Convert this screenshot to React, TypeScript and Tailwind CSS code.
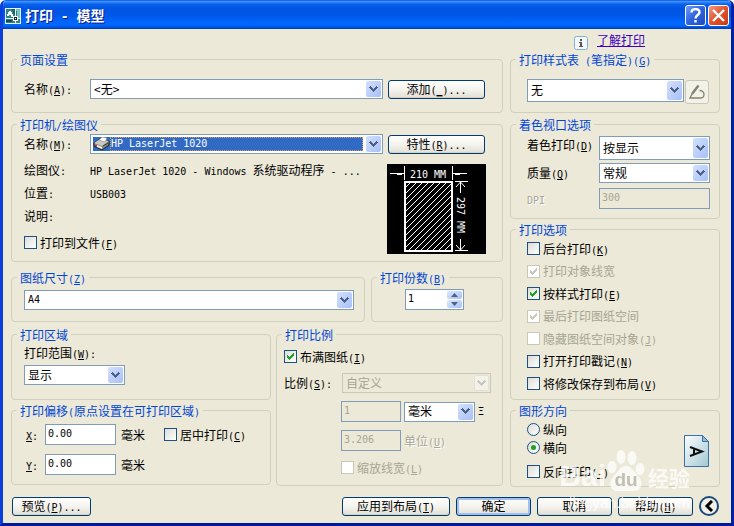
import React, { useId } from "react";

const CJK = /([\u3000-\u9fff]+)/;

/* Chinese runs at 12px, Latin runs at half width; "&" marks the access key. */
function T({ s }: { s: string }) {
  return (
    <>
      {s.split(CJK).map((part, i) => {
        if (!part) return null;
        if (CJK.test(part)) return <span key={i}>{part}</span>;
        const at = part.indexOf("&");
        return (
          <span key={i} className="font-['DejaVu_Sans_Mono',monospace] text-[10px] leading-[0] whitespace-pre">
            {at < 0 ? (
              part
            ) : (
              <>
                {part.slice(0, at)}
                <u>{part[at + 1]}</u>
                {part.slice(at + 2)}
              </>
            )}
          </span>
        );
      })}
    </>
  );
}

function Group({ title, className = "", body = "", children }: {
  title: string; className?: string; body?: string; children: React.ReactNode;
}) {
  return (
    <fieldset className={`min-w-0 rounded-[4px] border border-[#d0d0bf] ${className}`}>
      <legend className="ml-[5px] px-[3px] leading-[15px] text-[#0046d5]">
        <T s={title} />
      </legend>
      <div className={body}>{children}</div>
    </fieldset>
  );
}

function Arrow({ disabled = false }: { disabled?: boolean }) {
  return (
    <span
      className={`pointer-events-none m-[2px] flex w-[15px] items-center justify-center justify-self-end rounded-[2px] [grid-area:1/1] ${
        disabled ? "border border-[#e3e1d3] bg-[#f3f2ea]" : "bg-linear-to-br from-[#d3e0fe] to-[#a8c0f8]"
      }`}
    >
      <svg width="9" height="7" viewBox="0 0 9 7" shapeRendering="crispEdges">
        <path d="M1 0h1v1h1v1h1v1h1v-1h1v-1h1v-1h1v1h1v1h-1v1h-1v1h-1v1h-1v1h-1v-1h-1v-1h-1v-1h-1v-1h-1v-1h1z" fill={disabled ? "#c9c7ba" : "#4d6185"} />
      </svg>
    </span>
  );
}

function Select({ id, value, label, className = "", latin = false, disabled = false }: {
  id?: string; value: string; label?: string; className?: string; latin?: boolean; disabled?: boolean;
}) {
  return (
    <span className={`grid ${className}`}>
      <select
        id={id}
        aria-label={label}
        disabled={disabled}
        className={`w-full min-w-0 appearance-none border pr-[18px] pb-px pl-[3px] [grid-area:1/1] ${
          latin ? "font-['DejaVu_Sans_Mono',monospace] text-[10px]" : ""
        } ${disabled ? "border-[#c9c7ba] bg-[#ece9d8] text-[#a7a594] opacity-100" : "border-[#7f9db9] bg-white text-black"}`}
      >
        <option>{value}</option>
      </select>
      <Arrow disabled={disabled} />
    </span>
  );
}

function TextBox({ id, value, label, className = "", disabled = false }: {
  id?: string; value: string; label?: string; className?: string; disabled?: boolean;
}) {
  return (
    <input
      id={id}
      type="text"
      aria-label={label}
      defaultValue={value}
      disabled={disabled}
      className={`h-[21px] min-w-0 border border-[#7f9db9] pb-[3px] pl-[2px] font-['DejaVu_Sans_Mono',monospace] text-[10px] ${
        disabled ? "bg-[#ece9d8] text-[#a7a594]" : "bg-white text-black"
      } ${className}`}
    />
  );
}

function Check({ text, checked = false, disabled = false }: { text: string; checked?: boolean; disabled?: boolean }) {
  const id = useId();
  return (
    <div className="flex h-[13px] items-center gap-[3px]">
      <span className="grid size-[13px] place-items-center">
        <input
          id={id}
          type="checkbox"
          defaultChecked={checked}
          disabled={disabled}
          className={`size-[13px] appearance-none border [grid-area:1/1] ${
            disabled ? "border-[#cac8bb] bg-white" : "border-[#1c5180] bg-linear-to-br from-[#dcdcd7] to-white"
          }`}
        />
        {checked && (
          <svg className="pointer-events-none [grid-area:1/1]" width="7" height="7" viewBox="0 0 7 7" shapeRendering="crispEdges">
            <path d="M6 0h1v3h-1v1h-1v1h-1v1h-1v1h-1v-1h-1v-1h-1v-3h1v1h1v1h1v-1h1v-1h1v-1h1z" fill={disabled ? "#cac8bb" : "#21a121"} />
          </svg>
        )}
      </span>
      <label htmlFor={id} className={disabled ? "text-[#a7a594]" : ""}>
        <T s={text} />
      </label>
    </div>
  );
}

function Radio({ text, checked = false }: { text: string; checked?: boolean }) {
  const id = useId();
  return (
    <div className="flex h-[13px] items-center gap-[3px]">
      <span className="grid size-[13px] place-items-center">
        <input
          id={id}
          type="radio"
          name="orientation"
          defaultChecked={checked}
          className="size-[13px] appearance-none rounded-full border border-[#1c5180] bg-linear-to-br from-[#dcdcd7] to-white [grid-area:1/1]"
        />
        {checked && <span className="pointer-events-none size-[5px] rounded-full bg-[#21a121] [grid-area:1/1]" />}
      </span>
      <label htmlFor={id}>{text}</label>
    </div>
  );
}

function Button({ text, className = "", primary = false }: { text: string; className?: string; primary?: boolean }) {
  return (
    <button
      type="button"
      className={`h-[19px] rounded-[3px] border border-[#003c74] bg-linear-to-b from-white via-[#f4f3ee] to-[#e2dfd3] pb-px leading-[14px] ${
        primary ? "shadow-[inset_0_0_0_2px_#a3bff0,inset_0_-2px_0_0_#6982ee]" : "shadow-[inset_0_-1px_0_0_#d6d0c5]"
      } ${className}`}
    >
      <T s={text} />
    </button>
  );
}

function AppIcon() {
  return (
    <svg width="16" height="16" viewBox="0 0 16 16" shapeRendering="crispEdges" className="shrink-0">
      <rect width="16" height="16" fill="#e6efec" />
      <rect x="1" y="1" width="14" height="14" fill="#2f8585" />
      <path d="M11 1h4v9h-2z" fill="#7fc0b8" />
      <path d="M7 1h3v6H9z" fill="#1c6468" />
      <path d="M1 10h14v1H1zM10 1h1v14h-1z" fill="#e8f4f2" />
      <path d="M2 8V6h1V4h1V3h2v1h1v2h1v3H6V7H4v1z" fill="#fff" />
      <path d="M8 8h5v5H8z" fill="#fff" />
      <path d="M9 9h3v3H9z" fill="#123" />
      <path d="M10 10h1v1h-1z" fill="#fff" />
      <path d="M1 12h6v2H1z" fill="#124c50" />
    </svg>
  );
}

function PrinterIcon() {
  return (
    <svg width="17" height="14" viewBox="0 0 17 14" className="shrink-0">
      <path d="M1 6l6-4 9 2v4l-7 5-8-4z" fill="#8a8a86" stroke="#1c1c1c" />
      <path d="M1 6l6-4 9 2-7 5z" fill="#c9c9c2" />
      <path d="M6 3l3-3 5 1-2 4z" fill="#fff" stroke="#777" strokeWidth=".5" />
      <path d="M4 8l5 2v2L4 10z" fill="#efefef" />
      <path d="M2 8h2v1H2z" fill="#d22" />
      <path d="M10 9l5-3" stroke="#333" />
    </svg>
  );
}

function PaperPreview() {
  return (
    <svg width="99" height="90" viewBox="0 0 99 90" className="shrink-0 bg-black">
      <defs>
        <pattern id="hatch" width="6" height="6" patternUnits="userSpaceOnUse">
          <path d="M-1 1L1 -1M0 6L6 0M5 7L7 5" stroke="#fff" strokeWidth="1" />
        </pattern>
      </defs>
      <rect x="18" y="18" width="47" height="69" fill="url(#hatch)" stroke="#fff" strokeWidth="2" />
      <g stroke="#fff" fill="none" shapeRendering="crispEdges">
        <path d="M17.5 2v14M65.5 2v14M3 9.5h14M66 9.5h14M10 10.5h5M68 10.5h5M68 17.5h13M68 86.5h13M73.5 18v11M73.5 75v11" />
      </g>
      <path d="M69 23l4.500-5 4.500 5M69 81l4.500 5 4.500-5" stroke="#fff" fill="none" />
      <g fill="#fff" fontSize="10" fontFamily="DejaVu Sans Mono, monospace">
        <text x="23" y="14" xmlSpace="preserve">210 MM</text>
        <text transform="translate(70 33) rotate(90)" xmlSpace="preserve">297 MM</text>
      </g>
    </svg>
  );
}

function PlotIcon() {
  return (
    <svg width="16" height="16" viewBox="0 0 16 16" fill="none" stroke="#85826f">
      <path d="M9.500 1.500L3 10" strokeWidth="2.400" />
      <path d="M3 10L1 14h10c2 0 4-1 4-3.500S13 6.500 10.500 6.500" strokeWidth="1.300" />
    </svg>
  );
}

function LandscapeIcon() {
  return (
    <svg width="25" height="32" viewBox="0 0 25 32" className="shrink-0">
      <defs>
        <linearGradient id="sheet" x1="0" y1="0" x2="1" y2="1">
          <stop offset="0" stopColor="#fdfefe" />
          <stop offset="1" stopColor="#a3c8d4" />
        </linearGradient>
      </defs>
      <path d="M.5.5h18l6 6v25H.5z" fill="url(#sheet)" stroke="#3a70a6" />
      <path d="M18.500.5v6h6z" fill="#8fbcd8" stroke="#3a70a6" />
      <path d="M6 12l12 4.500L6 21M10 13.500v6" fill="none" stroke="#111" strokeWidth="2" />
    </svg>
  );
}

function Watermark() {
  return (
    <div className="pointer-events-none absolute right-[41px] bottom-[10px] text-white opacity-75" aria-hidden="true">
      <div className="flex h-[44px] items-end justify-end">
        <span className="font-['Liberation_Sans',sans-serif] text-[30px] leading-[34px] font-bold">Bai</span>
        <span className="grid">
          <svg width="40" height="44" viewBox="0 0 40 44" fill="#fff" className="[grid-area:1/1]">
            <ellipse cx="6" cy="18" rx="4.500" ry="6" />
            <ellipse cx="15" cy="8" rx="4.500" ry="7" />
            <ellipse cx="26" cy="9" rx="4.500" ry="7" />
            <ellipse cx="34" cy="20" rx="4.500" ry="6" />
            <path d="M20 17c6 0 8 6 13 11 5 6 2 14-5 14H12c-8 0-10-8-5-14 5-5 7-11 13-11z" />
          </svg>
          <span className="self-end pb-[2px] text-center font-['Liberation_Sans',sans-serif] text-[19px] leading-[22px] font-bold text-[#b5b2a4] [grid-area:1/1]">du</span>
        </span>
        <span className="pl-[2px] text-[21px] leading-[32px] font-bold">经验</span>
      </div>
      <div className="text-right font-['Liberation_Sans',sans-serif] text-[15px] leading-[20px]">jingyan.baidu.com</div>
    </div>
  );
}

export default function App() {
  return (
    <main className="relative w-full overflow-hidden rounded-t-[6px] border-x-3 border-b-3 border-[#0a3fdc] border-r-[#0020a8] border-b-[#001a9c] bg-[#ece9d8] font-['Noto_Sans_CJK_SC',sans-serif] text-[12px] leading-[14px] text-black">
      <header className="-mx-[3px] flex h-[29px] items-center bg-[linear-gradient(180deg,#0a4fd8_0%,#3d95ff_5%,#0a62ef_14%,#0054e0_28%,#0058ea_55%,#0068ff_80%,#0062f5_90%,#0038b8_100%)] pt-[2px] pr-[5px] pl-[5px]">
        <AppIcon />
        <h1 className="flex-1 pl-1 text-[14px] leading-[18px] font-bold text-white [text-shadow:1px_1px_#0a1883]">
          打印<span className="font-['DejaVu_Sans_Mono',monospace] text-[13px] whitespace-pre"> - </span>模型
        </h1>
        <div className="flex gap-[2px]">
          <button type="button" aria-label="帮助" className="flex size-[21px] items-center justify-center rounded-[3px] border border-white bg-linear-to-br from-[#6f9bf8] via-[#2f62dc] to-[#1c4cc4]">
            <svg width="11" height="15" viewBox="0 0 11 15" fill="none" stroke="#fff" strokeWidth="2.400">
              <path d="M1.500 4.500C1.500 0 9.500 0 9.500 4.200 9.500 7 5.500 7 5.500 10.500" />
              <path d="M5.500 12v2.500" />
            </svg>
          </button>
          <button type="button" aria-label="关闭" className="flex size-[21px] items-center justify-center rounded-[3px] border border-white bg-linear-to-br from-[#f09a80] via-[#e0502c] to-[#c83a10]">
            <svg width="13" height="13" viewBox="0 0 13 13" stroke="#fff" strokeWidth="2.400">
              <path d="M1 1l11 11M12 1L1 12" />
            </svg>
          </button>
        </div>
      </header>

      <div className="flex gap-[7px] pr-[11px] pl-[8px]">
        <div className="min-w-0 flex-1 pt-[23px]">
          <Group title="页面设置" body="pr-[17px] pb-[13px] pl-3">
            <div className="flex items-center pt-3">
              <label htmlFor="setup" className="w-[66px]"><T s="名称(&A):" /></label>
              <Select id="setup" value="<无>" className="h-[20px] flex-1" />
              <Button text="添加(&_)..." className="ml-[5px] w-[97px]" />
            </div>
          </Group>

          <Group title="打印机/绘图仪" className="mt-1" body="pr-[16px] pb-[7px] pl-3">
            <div className="flex items-center pt-[2px] pr-px">
              <label htmlFor="printer" className="w-[66px]"><T s="名称(&M):" /></label>
              <div className="grid h-[20px] min-w-0 flex-1 border border-[#7f9db9] bg-white">
                <div className="my-[2px] mr-[19px] ml-[2px] flex bg-[#316ac5] [grid-area:1/1]">
                  <PrinterIcon />
                  <select id="printer" className="min-w-0 flex-1 appearance-none border border-dotted border-[#e0a040] bg-[#316ac5] font-['DejaVu_Sans_Mono',monospace] text-[10px] leading-[12px] text-white">
                    <option>HP LaserJet 1020</option>
                  </select>
                </div>
                <span className="-m-px grid [grid-area:1/1] justify-self-end"><Arrow /></span>
              </div>
              <Button text="特性(&R)..." className="ml-[5px] w-[97px]" />
            </div>
            <div className="flex justify-between pt-[5px]">
              <div className="min-w-0">
                <dl className="grid grid-cols-[66px_1fr] gap-y-px leading-[22px]">
                  <dt><T s="绘图仪:" /></dt>
                  <dd className="truncate"><T s="HP LaserJet 1020 - Windows 系统驱动程序 - ..." /></dd>
                  <dt><T s="位置:" /></dt>
                  <dd><T s="USB003" /></dd>
                  <dt><T s="说明:" /></dt>
                  <dd />
                </dl>
                <div className="pt-[9px]"><Check text="打印到文件(&F)" /></div>
              </div>
              <div className="h-[95px] pt-[5px]"><PaperPreview /></div>
            </div>
          </Group>

          <div className="mt-2 flex gap-[6px]">
            <Group title="图纸尺寸(&Z)" className="flex-1" body="pt-[5px] pr-[10px] pb-[11px] pl-3">
              <Select latin value="A4" label="图纸尺寸" className="h-[20px]" />
            </Group>
            <Group title="打印份数(&B)" className="w-[132px]" body="pt-1 pl-[33px]">
              <div className="flex h-[21px] w-[59px] border border-[#7f9db9] bg-white">
                <input type="text" aria-label="打印份数" defaultValue="1" className="min-w-0 flex-1 pb-[2px] pl-[2px] font-['DejaVu_Sans_Mono',monospace] text-[10px]" />
                <div className="m-px flex w-[15px] flex-col gap-px">
                  <button type="button" aria-label="增加" className="flex flex-1 items-center justify-center rounded-[2px] bg-linear-to-br from-[#dde8fe] to-[#a8c0f8]">
                    <svg width="7" height="4" viewBox="0 0 7 4"><path d="M0 4L3.500 0 7 4z" fill="#4d6185" /></svg>
                  </button>
                  <button type="button" aria-label="减少" className="flex flex-1 items-center justify-center rounded-[2px] bg-linear-to-br from-[#dde8fe] to-[#a8c0f8]">
                    <svg width="7" height="4" viewBox="0 0 7 4"><path d="M0 0h7L3.500 4z" fill="#4d6185" /></svg>
                  </button>
                </div>
              </div>
            </Group>
          </div>

          <div className="mt-[5px] flex gap-[5px]">
            <div className="w-[260px]">
              <Group title="打印区域" body="pt-1 pb-[14px] pl-3">
                <label htmlFor="range" className="block"><T s="打印范围(&W):" /></label>
                <Select id="range" value="显示" className="mt-[5px] h-[20px] w-[101px]" />
              </Group>
              <Group title="打印偏移(原点设置在可打印区域)" className="mt-[3px]" body="pt-[6px] pb-[9px] pl-[14px]">
                <div className="flex items-center">
                  <label htmlFor="offx" className="w-[19px]"><T s="&X:" /></label>
                  <TextBox id="offx" value="0.00" className="w-[71px]" />
                  <span className="w-[48px] pl-[5px]">毫米</span>
                  <Check text="居中打印(&C)" />
                </div>
                <div className="mt-[9px] flex items-center">
                  <label htmlFor="offy" className="w-[19px]"><T s="&Y:" /></label>
                  <TextBox id="offy" value="0.00" className="w-[71px]" />
                  <span className="pl-[5px]">毫米</span>
                </div>
              </Group>
            </div>

            <Group title="打印比例" className="flex-1" body="pt-2 pr-[11px] pb-[11px] pl-[7px]">
              <Check text="布满图纸(&I)" checked />
              <div className="flex items-center pt-[10px]">
                <label htmlFor="scale" className="w-[58px]"><T s="比例(&S):" /></label>
                <Select id="scale" value="自定义" disabled className="h-[20px] flex-1" />
              </div>
              <div className="pl-[57px]">
                <div className="flex items-center gap-[3px] pt-2">
                  <TextBox value="1" label="图纸单位数" disabled className="w-[60px]" />
                  <Select value="毫米" label="单位" className="h-[20px] w-[71px]" />
                  <span className="font-['DejaVu_Sans_Mono',monospace] text-[10px]">Ξ</span>
                </div>
                <div className="flex items-center gap-[3px] pt-2 pb-[10px]">
                  <TextBox id="units" value="3.206" disabled className="w-[60px]" />
                  <label htmlFor="units" className="text-[#a7a594] [text-shadow:1px_1px_#fff]"><T s="单位(&U)" /></label>
                </div>
                <Check text="缩放线宽(&L)" disabled />
              </div>
            </Group>
          </div>
        </div>

        <div className="w-[210px]">
          <div className="flex h-[23px] items-start gap-[9px] pt-1 pl-[64px]">
            <svg width="14" height="14" viewBox="0 0 14 14" className="mt-[3px]">
              <rect x=".5" y=".5" width="13" height="13" rx="2" fill="#f4f8fb" stroke="#7fb2d8" />
              <path d="M6 3h2v2H6zM5 6h3v4h1v1H5v-1h1V7H5z" fill="#555" />
            </svg>
            <a href="#about" className="text-[#4000c0] underline">了解打印</a>
          </div>

          <Group title="打印样式表 (笔指定)(&G)" body="pr-[10px] pb-2 pl-4">
            <div className="flex items-start gap-px pt-3">
              <Select value="无" label="打印样式表" className="h-[23px] flex-1" />
              <button type="button" aria-label="编辑" className="mt-px flex size-[24px] items-center justify-center rounded-[3px] border border-[#c9c7ba] bg-[#f3f2e8]">
                <PlotIcon />
              </button>
            </div>
          </Group>

          <Group title="着色视口选项" className="mt-1" body="pt-1 pr-[9px] pb-[9px] pl-4">
            <div className="flex items-start">
              <label htmlFor="shade" className="w-[72px] pt-[2px]"><T s="着色打印(&D)" /></label>
              <Select id="shade" value="按显示" className="h-[24px] flex-1" />
            </div>
            <div className="flex items-center pt-[3px]">
              <label htmlFor="quality" className="w-[72px]"><T s="质量(&Q)" /></label>
              <Select id="quality" value="常规" className="h-[20px] flex-1" />
            </div>
            <div className="flex items-center pt-[5px]">
              <label htmlFor="dpi" className="w-[72px] text-[#a7a594] [text-shadow:1px_1px_#fff]"><T s="DPI" /></label>
              <TextBox id="dpi" value="300" disabled className="flex-1" />
            </div>
          </Group>

          <Group title="打印选项" className="mt-[3px]" body="pt-[5px] pb-[9px] pl-4">
            <div className="flex h-[148px] flex-col justify-between">
              <Check text="后台打印(&K)" />
              <Check text="打印对象线宽" checked disabled />
              <Check text="按样式打印(&E)" checked />
              <Check text="最后打印图纸空间" checked disabled />
              <Check text="隐藏图纸空间对象(&J)" disabled />
              <Check text="打开打印戳记(&N)" />
              <Check text="将修改保存到布局(&V)" />
            </div>
          </Group>

          <Group title="图形方向" className="mt-[3px]" body="pt-[5px] pr-[10px] pb-2 pl-4">
            <div className="flex items-center justify-between">
              <div>
                <Radio text="纵向" />
                <div className="pt-[5px] pb-[11px]"><Radio text="横向" checked /></div>
                <Check text="反向打印(&-)" />
              </div>
              <LandscapeIcon />
            </div>
          </Group>
        </div>
      </div>

      <footer className="flex items-center gap-[6px] pt-[9px] pr-3 pb-[7px] pl-[9px]">
        <Button text="预览(&P)..." className="mr-auto w-[79px]" />
        <Button text="应用到布局(&T)" className="w-[108px]" />
        <Button text="确定" primary className="w-[75px]" />
        <Button text="取消" className="w-[75px]" />
        <Button text="帮助(&H)" className="w-[75px]" />
        <button type="button" aria-label="收起" className="flex size-[20px] items-center justify-center rounded-full border-2 border-[#1c4a78] bg-[#f0f0ea]">
          <svg width="10" height="12" viewBox="0 0 10 12" fill="none" stroke="#000" strokeWidth="3">
            <path d="M8 1L3 6l5 5" />
          </svg>
        </button>
      </footer>
      <Watermark />
    </main>
  );
}
